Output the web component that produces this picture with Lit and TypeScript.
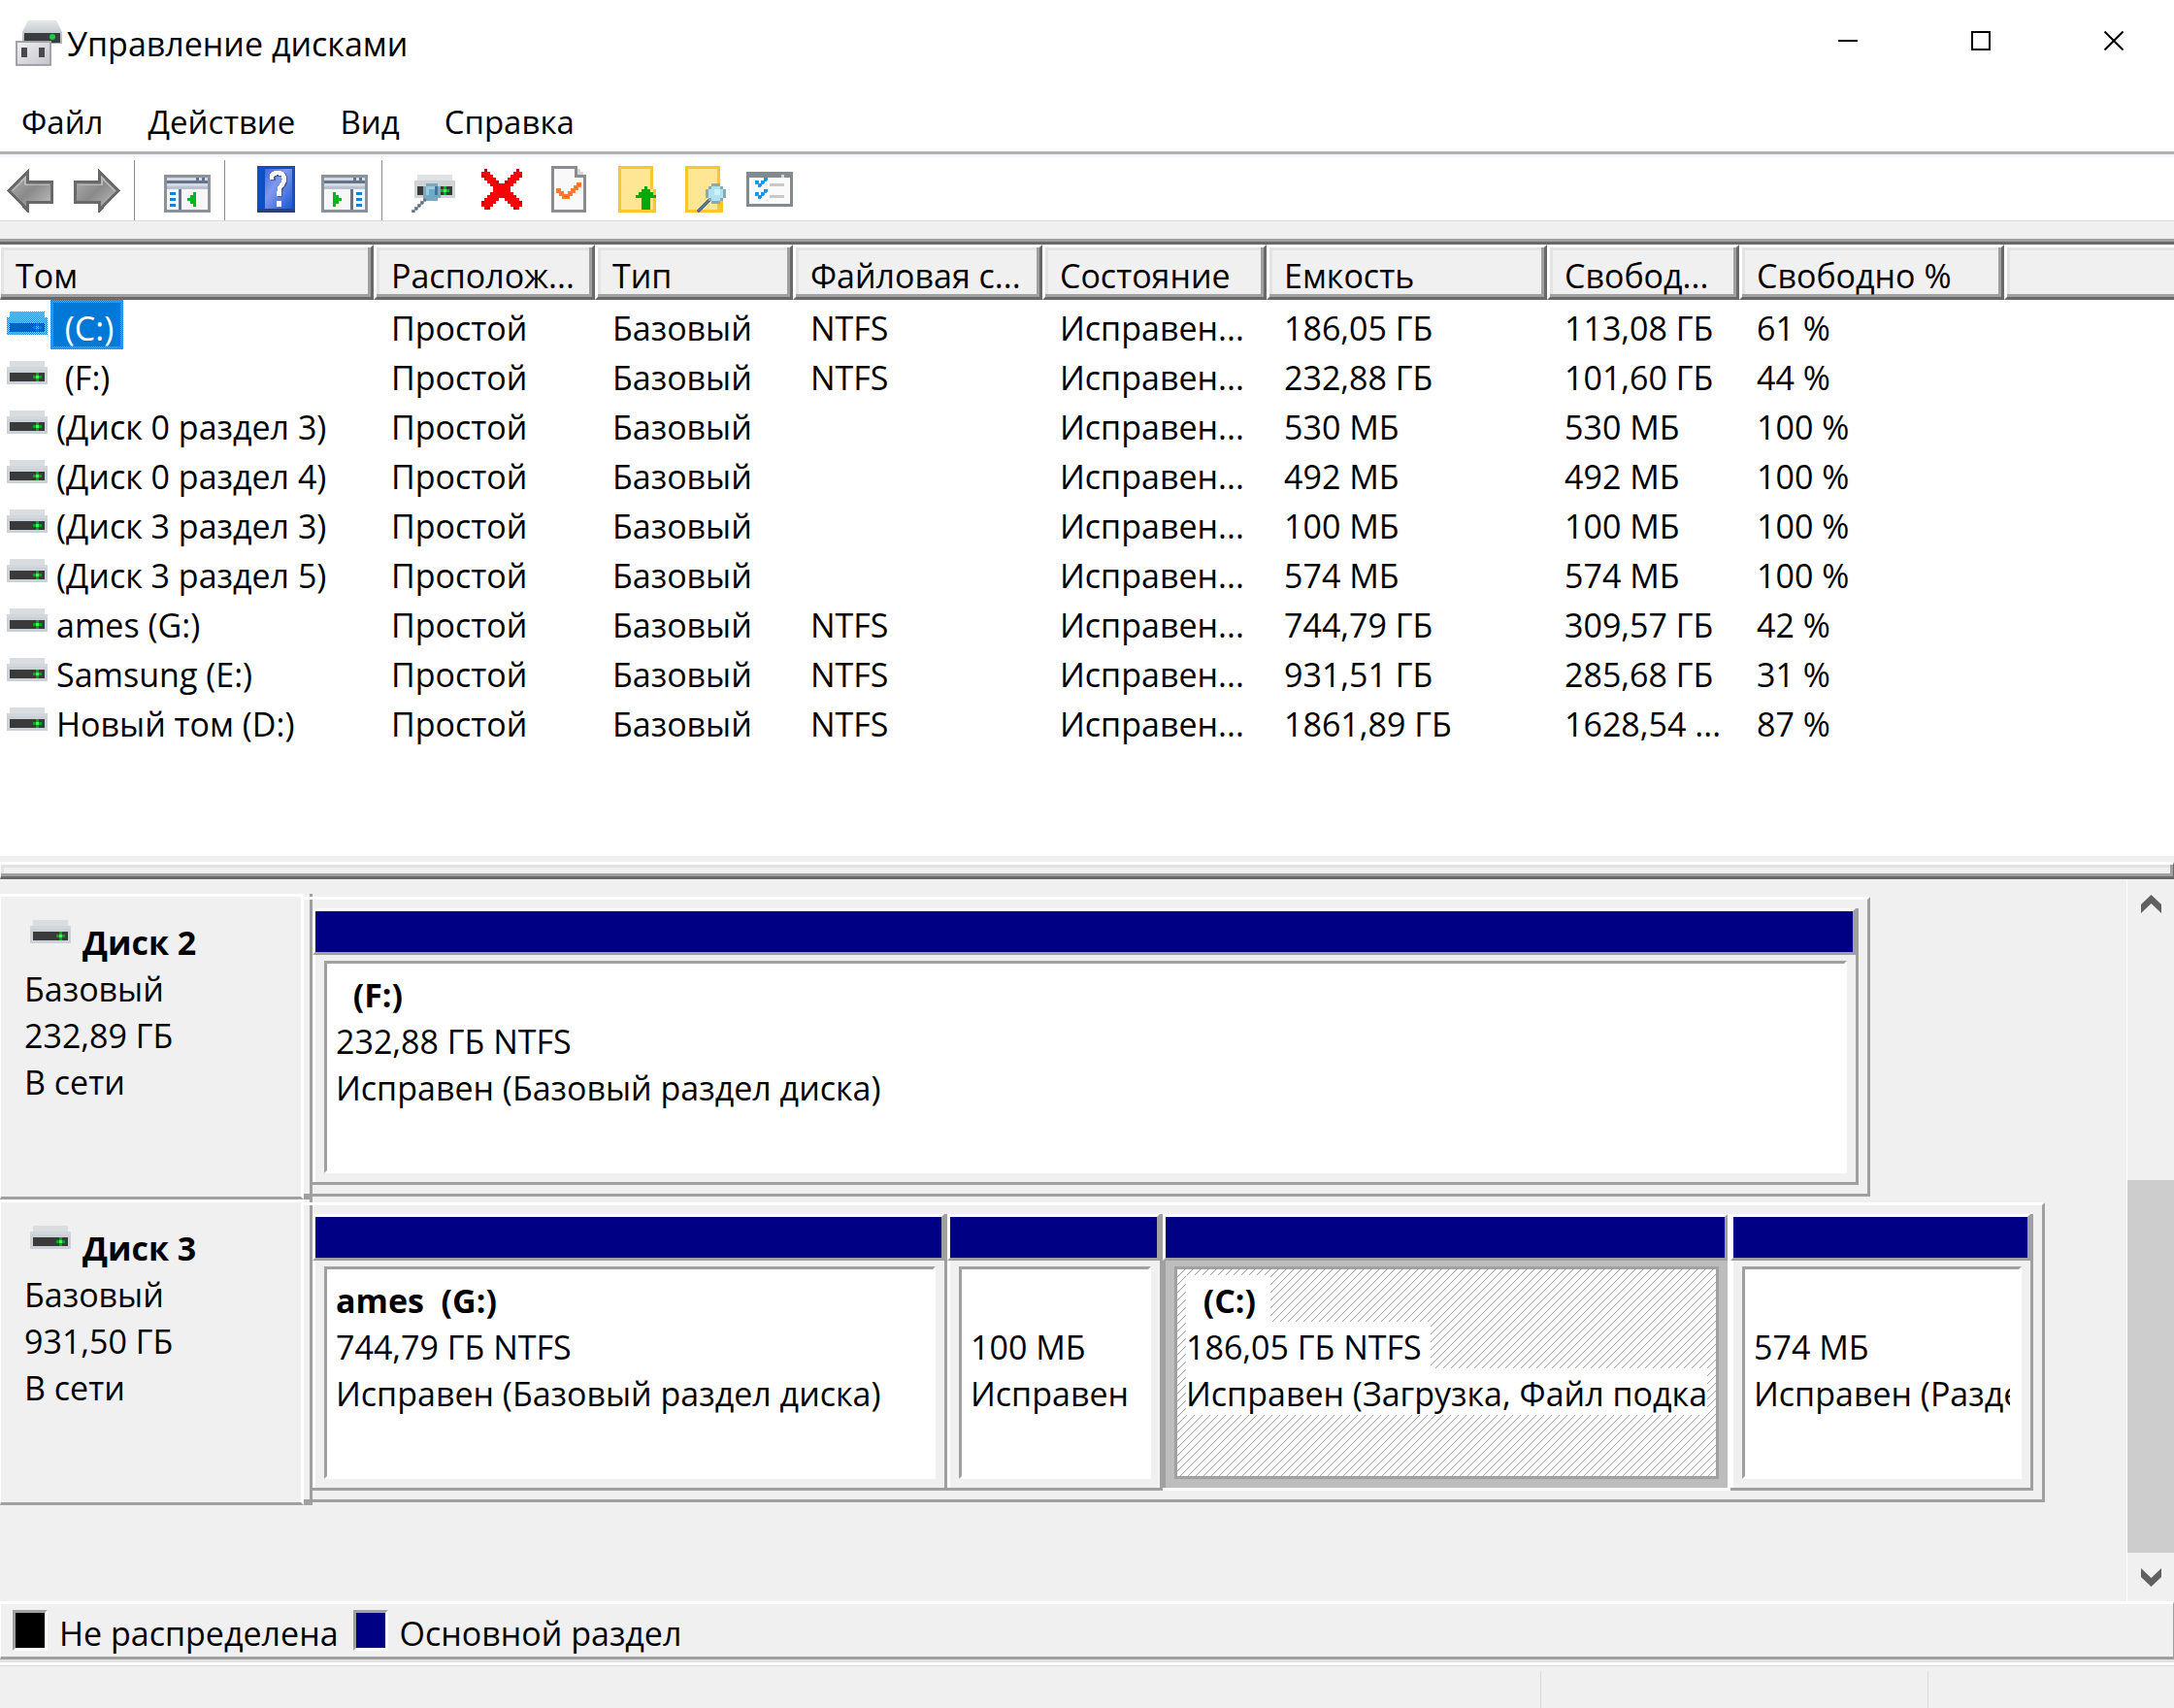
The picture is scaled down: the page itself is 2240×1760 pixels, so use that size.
import { LitElement, html, css, svg, nothing } from "lit";
import { customElement, property } from "lit/decorators.js";

interface Volume {
  name: string;
  fs: string;
  capacity: string;
  free: string;
  percent: string;
}

interface Partition {
  title: string;
  size: string;
  status: string;
  weight: number;
  selected?: boolean;
}

interface Disk {
  name: string;
  size: string;
  span: number;
  partitions: Partition[];
}

const volumes: Volume[] = [
  { name: " (C:)", fs: "NTFS", capacity: "186,05 ГБ", free: "113,08 ГБ", percent: "61 %" },
  { name: " (F:)", fs: "NTFS", capacity: "232,88 ГБ", free: "101,60 ГБ", percent: "44 %" },
  { name: "(Диск 0 раздел 3)", fs: "", capacity: "530 МБ", free: "530 МБ", percent: "100 %" },
  { name: "(Диск 0 раздел 4)", fs: "", capacity: "492 МБ", free: "492 МБ", percent: "100 %" },
  { name: "(Диск 3 раздел 3)", fs: "", capacity: "100 МБ", free: "100 МБ", percent: "100 %" },
  { name: "(Диск 3 раздел 5)", fs: "", capacity: "574 МБ", free: "574 МБ", percent: "100 %" },
  { name: "ames (G:)", fs: "NTFS", capacity: "744,79 ГБ", free: "309,57 ГБ", percent: "42 %" },
  { name: "Samsung (E:)", fs: "NTFS", capacity: "931,51 ГБ", free: "285,68 ГБ", percent: "31 %" },
  { name: "Новый том (D:)", fs: "NTFS", capacity: "1861,89 ГБ", free: "1628,54 ...", percent: "87 %" },
];

/* Spans are shares of the graph area, which is GRAPH_TOTAL units wide. */
const GRAPH_TOTAL = 1869;

const disks: Disk[] = [
  {
    name: "Диск 2",
    size: "232,89 ГБ",
    span: 1605,
    partitions: [
      { title: "  (F:)", size: "232,88 ГБ NTFS", status: "Исправен (Базовый раздел диска)", weight: 1590 },
    ],
  },
  {
    name: "Диск 3",
    size: "931,50 ГБ",
    span: 1785,
    partitions: [
      { title: "ames  (G:)", size: "744,79 ГБ NTFS", status: "Исправен (Базовый раздел диска)", weight: 651 },
      { title: "", size: "100 МБ", status: "Исправен", weight: 219 },
      { title: "  (C:)", size: "186,05 ГБ NTFS", status: "Исправен (Загрузка, Файл подка", weight: 582, selected: true },
      { title: "", size: "574 МБ", status: "Исправен (Разде", weight: 309 },
    ],
  },
];

const headers = ["Том", "Располож...", "Тип", "Файловая с...", "Состояние", "Емкость", "Свобод...", "Свободно %"];

const icons: Record<string, unknown> = {
  back: svg`
    <defs><linearGradient id="g" x1="0" y1="0" x2="1" y2="1"><stop offset="0" stop-color="#b4b4b4"/><stop offset=".5" stop-color="#8a8a8a"/><stop offset="1" stop-color="#c4c4c4"/></linearGradient></defs>
    <path d="M.7 8.5 7.3 1.9V5.5H15.5V12.5H7.3V15.3Z" fill="url(#g)" stroke="#696969"/>
    <path d="M2 8.5 6.4 4V6.5H14.5" fill="none" stroke="#b8b8b8" stroke-width=".6"/>`,
  forward: svg`
    <defs><linearGradient id="g" x1="0" y1="0" x2="1" y2="1"><stop offset="0" stop-color="#b4b4b4"/><stop offset=".5" stop-color="#8a8a8a"/><stop offset="1" stop-color="#c4c4c4"/></linearGradient></defs>
    <path d="M15.3 8.5 8.7 1.9V5.5H.5V12.5H8.7V15.3Z" fill="url(#g)" stroke="#696969"/>
    <path d="M1.5 6.5H9.6V4L14 8.5" fill="none" stroke="#b8b8b8" stroke-width=".6"/>`,
  tree: svg`
    <path d="M0 3H16V16H0Z" fill="#8b9299"/><path d="M1 4H15V7H1Z" fill="#d3dae2"/>
    <path d="M1 5H15V6H1Z" fill="#64748c"/><path d="M11 4h1v1h-1zM13 4h1v1h-1z" fill="#64748c"/>
    <path d="M1 7H15V8H1Z" fill="#b9c2cc"/><path d="M1 8H15V15H1Z" fill="#f7f7f7"/>
    <path d="M5 8H6V15H5Z" fill="#64748c"/>
    <path d="M2 9h2v1H2zM2 11h2v1H2zM2 13h2v1H2z" fill="#1583d0"/>
    <path d="M11 9V14H10V13H9V12H8V11H9V10H10V9Z" fill="#00b81c"/>`,
  help: svg`
    <defs><linearGradient id="h" x1="0" y1="0" x2="1" y2="1"><stop offset="0" stop-color="#3f68d8"/><stop offset=".4" stop-color="#8199ee"/><stop offset="1" stop-color="#1a58d0"/></linearGradient></defs>
    <path d="M1 0H14V16H1Z" fill="#0f4fc4"/><path d="M3.5 1H13V14.5H3.5Z" fill="url(#h)"/>
    <path d="M1 14.5H14V16H1Z" fill="#2c4274"/><path d="M13 1h1v14h-1z" fill="#1a4fb8"/>
    <path d="M6.5 5V4Q6.5 2.7 8.5 2.7 10.7 2.7 10.7 4.8 10.7 6.3 9.5 7.3 8.9 8 8.9 10.5" fill="none" stroke="#4b5f9c" stroke-width="1.6"/>
    <path d="M6 4.6V3.6Q6.2 2.4 8.2 2.4 10.3 2.4 10.3 4.5 10.3 6 9.1 7 8.5 7.7 8.5 10.3M8.5 12V14" fill="none" stroke="#fff" stroke-width="1.5"/>`,
  pane: svg`
    <path d="M0 3H16V16H0Z" fill="#8b9299"/><path d="M1 4H15V7H1Z" fill="#d3dae2"/>
    <path d="M1 5H15V6H1Z" fill="#64748c"/><path d="M11 4h1v1h-1zM13 4h1v1h-1z" fill="#64748c"/>
    <path d="M1 7H15V8H1Z" fill="#b9c2cc"/><path d="M1 8H15V15H1Z" fill="#f7f7f7"/>
    <path d="M10 8H11V15H10Z" fill="#64748c"/>
    <path d="M12 9h2v1h-2zM12 11h2v1h-2zM12 13h2v1h-2z" fill="#1583d0"/>
    <path d="M4 9V14H5V13H6V12H7V11H6V10H5V9Z" fill="#00b81c"/>`,
  scan: svg`
    <path d="M2 3H14V5H15V11H1V5H2Z" fill="#ced3d6"/><path d="M2 3H14V5H2Z" fill="#dfe2e4"/>
    <path d="M2 7H14V10H2Z" fill="#383838"/><path d="M11 7h1v3h-1zM10 8h3v1h-3z" fill="#00b81c"/><path d="M11 8h1v1h-1z" fill="#2cff4c"/>
    <path d="M0 15H1V14H2V13H3V12H4V11H5V12H4V13H3V14H2V15H1V16H0Z" fill="#5e6e7c" stroke="#8794a0" stroke-width=".3"/>
    <path d="M5 6H9V7H10V11H9V12H5V11H4V7H5Z" fill="#7fa6bc"/><path d="M5 7H9V11H5Z" fill="#6fa9c8"/>
    <path d="M5 7H8V8H6V10H5Z" fill="#9ccbe0"/><path d="M8 7H9V10H8Z" fill="#3d7899"/>`,
  remove: svg`
    <path d="M2 1H3V2H4V3H5V4H6V5H7V6H9V5H10V4H11V3H12V2H13V1H14V2H15V4H14V5H13V6H12V7H11V9H12V10H13V11H14V12H15V14H14V15H12V14H11V13H10V12H9V11H7V12H6V13H5V14H4V15H2V14H1V12H2V11H3V10H4V9H5V7H4V6H3V5H2V4H1V2H2Z" fill="#fb0007"/>
    <path d="M2 1h1v1H2zM13 1h1v1h-1zM1 3h1v1H1zM14 3h1v1h-1zM1 12h1v1H1zM14 12h1v1h-1zM3 14h1v1H3zM12 14h1v1h-1zM6 5h1v1H6zM9 5h1v1H9z" fill="#c4000c"/>`,
  check: svg`
    <path d="M2 0H11V1H12V2H13V3H14V16H2Z" fill="#8c8c8e"/><path d="M3 1H10V4H13V15H3Z" fill="#f9f9f9"/>
    <path d="M11 1h1v1h1v1h-2z" fill="#d8d8da"/>
    <path d="M11 6H12V7H11V8H10V9H9V10H8V11H6V10H5V9H4V8H5V9H6V10H8V9H9V8H10V7H11Z" fill="#ff5a0a" stroke="#ff7a38" stroke-width=".4"/>`,
  up: svg`
    <path d="M2 0H14V8H15V16H2Z" fill="#f9c62f"/><path d="M3 1H13V15H3Z" fill="#ffe694"/><path d="M13 8h1v7h-1z" fill="#ffe08a"/>
    <path d="M11 7H12V8H13V9H14V10H15V11H13V15H10V11H8V10H9V9H10V8H11Z" fill="#00a80a"/>`,
  find: svg`
    <path d="M2 0H14V8H15V16H2Z" fill="#f9c62f"/><path d="M3 1H13V15H3Z" fill="#ffe694"/>
    <path d="M6.3 15.7 10.5 11.5" stroke="#5f7282" stroke-width="1.3"/>
    <path d="M11 6H14V7H15V8H16V11H15V12H14V13H11V12H10V11H9V8H10V7H11Z" fill="#8aa9b0"/><path d="M11 7H14V8H15V11H14V12H11V11H10V8H11Z" fill="#aee2f2"/><path d="M12 8h2v2h-2z" fill="#cdf2fb"/>`,
  list: svg`
    <path d="M0 2H16V14H0Z" fill="#838a8e"/><path d="M1 4H15V13H1Z" fill="#fafafa"/><path d="M12 3h1v1h-1z" fill="#d4d8da"/>
    <path d="M3 5H4V6H5V5H6V4H7V5H6V6H5V7H4V6H3ZM3 9H4V10H5V9H6V8H7V9H6V10H5V11H4V10H3Z" fill="#1196ea" stroke="#1196ea" stroke-width=".3"/>
    <path d="M8 6h5v1H8zM8 10h5v1H8z" fill="#c8c8c8"/>`,
};

const driveArt = svg`
  <path d="M1 0H13V2H14V8H0V2H1Z" fill="#cbd1d6"/>
  <path d="M1 0H13V2H1Z" fill="#d9dde0"/><path d="M0 2H14V3H0Z" fill="#d2d7dc"/>
  <path d="M1 4H13V7H1Z" fill="#3a3a3a"/>
  <path d="M10 4h1v3h-1zM9 5h3v1H9z" fill="#00a51e"/><path d="M10 5h1v1h-1z" fill="#2eff52"/>`;

const appArt = svg`
  <defs>
    <linearGradient id="lid" x1="0" y1="0" x2="0" y2="1"><stop offset="0" stop-color="#e4e8ea"/><stop offset="1" stop-color="#aab0b6"/></linearGradient>
    <linearGradient id="plug" x1="0" y1="0" x2="1" y2="1"><stop offset="0" stop-color="#f1f1f3"/><stop offset="1" stop-color="#c4c4ca"/></linearGradient>
  </defs>
  <path d="M13 0H42L48 12V24H7V12Z" fill="url(#lid)"/>
  <path d="M9 13H46V23H9Z" fill="#3a3d3f"/>
  <circle cx="38" cy="17" r="3" fill="#17cf3c"/>
  <path d="M1 22H36V46H1Z" fill="url(#plug)" stroke="#a2a2a8" stroke-width="2"/>
  <path d="M6 28h6v10H6zM24 28h6v10H24z" fill="#4a4a4e"/>`;

@customElement("drive-icon")
export class DriveIcon extends LitElement {
  @property({ type: Boolean }) selected = false;

  static styles = css`
    :host {
      display: inline-block;
      flex: none;
      width: 42px;
      height: 24px;
    }
    svg {
      display: block;
      width: 42px;
      height: 24px;
    }
  `;

  render() {
    return html`<svg viewBox="0 0 14 8" shape-rendering="crispEdges" aria-hidden="true">
      ${driveArt}
      ${this.selected
        ? svg`<defs><pattern id="dots" width="2" height="2" patternUnits="userSpaceOnUse" patternTransform="scale(.33333)">
            <path d="M0 0h1v1H0zM1 1h1v1H1z" fill="#0078d7"/></pattern></defs>
            <path d="M1 0H13V2H14V8H0V2H1Z" fill="url(#dots)"/>`
        : nothing}
    </svg>`;
  }
}

@customElement("tool-button")
export class ToolButton extends LitElement {
  @property() icon = "";
  @property() label = "";

  static styles = css`
    :host {
      display: block;
      width: 48px;
      height: 48px;
    }
    button {
      display: block;
      border: 0;
      padding: 0;
      background: none;
    }
    svg {
      display: block;
      width: 48px;
      height: 48px;
    }
  `;

  render() {
    return html`<button aria-label=${this.label}>
      <svg viewBox="0 0 16 16" shape-rendering="crispEdges" aria-hidden="true">${icons[this.icon]}</svg>
    </button>`;
  }
}

@customElement("app-root")
export class AppRoot extends LitElement {
  static styles = css`
    :host {
      --face: #f0f0f0;
      --light: #e3e3e3;
      --shade: #a0a0a0;
      --dark: #696969;
      --navy: #000084;
      display: flex;
      flex-direction: column;
      min-height: 100vh;
      background: var(--face);
      color: #000;
      font: 34px/48px "Open Sans", "Noto Sans", sans-serif;
      white-space: nowrap;
      overflow: hidden;
    }
    * {
      box-sizing: border-box;
    }
    button {
      border: 0;
      padding: 0;
      background: none;
      font: inherit;
      color: inherit;
    }
    svg {
      display: block;
    }
    .titlebar {
      display: flex;
      align-items: flex-start;
      justify-content: space-between;
      height: 98px;
      padding-left: 16px;
      background: #fff;
    }
    .brand {
      display: flex;
      gap: 5px;
      padding-top: 21px;
    }
    .brand svg {
      width: 48px;
      height: 47px;
    }
    h1 {
      margin: 0;
      font-size: 34px;
      font-weight: 400;
      line-height: 48px;
    }
    .controls {
      display: flex;
      gap: 33px;
      padding-right: 10px;
    }
    .controls button {
      display: grid;
      place-items: center;
      width: 104px;
      height: 84px;
    }
    .controls svg {
      width: 20px;
      height: 20px;
    }
    .menu {
      display: flex;
      gap: 46px;
      height: 58px;
      padding-left: 22px;
      background: #fff;
      font-size: 33px;
    }
    .menu button {
      height: 56px;
      line-height: 56px;
    }
    .toolbar {
      display: flex;
      align-items: flex-start;
      height: 72px;
      padding: 6px 7px 0;
      border-top: 3px solid #b1b1b1;
      border-bottom: 1px solid #d9d9d9;
      background: linear-gradient(#f1f5f9, #f1f5f9) 0 0 / 100% 3px no-repeat #fff;
    }
    .toolbar tool-button {
      margin-top: 6px;
    }
    tool-button + tool-button {
      margin-left: 21px;
    }
    .separator {
      width: 1px;
      height: 62px;
      margin: 0 30px 0 14px;
      background: #8c8c8c;
    }
    .band {
      height: 18px;
    }
    .volumes {
      flex: 633 1 0;
      border-top: 3px solid var(--shade);
      background: #fff;
    }
    table {
      width: 100%;
      table-layout: fixed;
      border-top: 3px solid var(--dark);
      border-spacing: 0;
      border-collapse: separate;
    }
    .c-name { width: 385px; }
    .c-layout { width: 228px; }
    .c-type { width: 204px; }
    .c-fs { width: 257px; }
    .c-state { width: 231px; }
    .c-size { width: 289px; }
    .c-free { width: 198px; }
    .c-percent { width: 273px; }
    th {
      height: 57px;
      padding: 8px 0 0 15px;
      border: 3px solid var(--dark);
      border-top-color: #fff;
      border-left-color: #fff;
      background: var(--face);
      box-shadow: inset -3px -3px var(--shade), inset 3px 3px var(--light);
      font-weight: 400;
      line-height: 39px;
      text-align: left;
      overflow: hidden;
    }
    th:first-child {
      border-left-width: 1px;
    }
    th:last-child {
      border-right: 0;
      box-shadow: inset 0 -3px var(--shade), inset 3px 3px var(--light);
    }
    td {
      height: 51px;
      padding: 8px 0 0 18px;
      line-height: 43px;
      overflow: hidden;
    }
    td:first-child {
      padding: 0 0 0 7px;
    }
    .entry {
      display: flex;
      align-items: flex-start;
      gap: 3px;
      height: 51px;
    }
    .entry drive-icon {
      margin-top: 12px;
    }
    .caption {
      height: 51px;
      padding: 8px 10px 0 6px;
      line-height: 43px;
      white-space: pre;
    }
    .caption.selected {
      color: #fff;
      background:
        linear-gradient(#0078d7, #0078d7) 3px 3px / calc(100% - 6px) calc(100% - 6px) no-repeat,
        repeating-conic-gradient(#0078d7 0 25%, #e58a3c 0 50%) 0 0 / 2px 2px;
    }
    .splitter {
      height: 18px;
      margin-top: 6px;
      border: 3px solid var(--dark);
      border-width: 3px 1px 3px 1px;
      border-top-color: #fff;
      border-left-color: #fff;
      box-shadow: inset -3px -3px var(--shade), inset 3px 3px var(--light);
    }
    .disks {
      display: flex;
      flex: 744 1 0;
    }
    .canvas {
      flex: 1;
      padding-top: 15px;
    }
    .disk {
      display: grid;
      height: 315px;
    }
    .label {
      padding: 21px 0 0 24px;
      border: 3px solid #fff;
      border-left-width: 1px;
      border-bottom-color: var(--shade);
    }
    .label h2 {
      display: flex;
      align-items: flex-start;
      gap: 12px;
      margin: 0;
      padding-left: 6px;
      font: inherit;
      font-weight: 700;
    }
    .label drive-icon {
      margin-top: 3px;
    }
    .line {
      display: block;
      width: fit-content;
      height: 48px;
      padding-top: 4px;
      line-height: 44px;
      white-space: pre;
    }
    .gutter {
      background:
        linear-gradient(#fff, #fff) 0 3px / 9px 3px no-repeat,
        linear-gradient(var(--shade), var(--shade)) 0 100% / 9px 6px no-repeat,
        linear-gradient(var(--shade), var(--shade)) 100% 0 / 3px 100% no-repeat;
    }
    .graph {
      display: flex;
      height: 309px;
      margin-top: 3px;
      padding: 9px 9px 9px 0;
      border: 0 solid var(--shade);
      border-width: 3px 3px 3px 0;
      border-top-color: #fff;
    }
    .partition {
      display: flex;
      flex-direction: column;
      flex-basis: 0;
      min-width: 0;
      border: 0 solid var(--shade);
      border-width: 0 3px 3px 0;
    }
    .bar {
      height: 48px;
      border: 3px solid var(--shade);
      border-top-color: #fff;
      border-left-color: #fff;
      background: var(--navy);
    }
    .cell {
      flex: 1;
      padding: 6px 9px 9px;
      border-left: 3px solid #fff;
    }
    .box {
      position: relative;
      height: 219px;
      padding: 6px 9px 0;
      border: 3px solid #fff;
      border-top-color: var(--shade);
      border-left-color: var(--shade);
      background: #fff;
    }
    .hatch {
      position: absolute;
      inset: 0;
      width: 100%;
      height: 100%;
    }
    .text {
      position: relative;
      overflow: hidden;
    }
    .partition.selected {
      border-color: #fff;
    }
    .selected .cell {
      border-left-color: var(--shade);
      background: #bdbdbd;
    }
    .selected .box {
      border-color: var(--shade);
    }
    .selected .line {
      padding-right: 9px;
      background: #fff;
    }
    .selected .title {
      padding-right: 15px;
    }
    .scrollbar {
      display: flex;
      flex-direction: column;
      width: 49px;
      border-left: 1px solid #fff;
    }
    .scrollbar button {
      display: grid;
      place-items: center;
      height: 50px;
    }
    .scrollbar svg {
      width: 21px;
      height: 19px;
    }
    .track {
      display: flex;
      flex-direction: column;
      flex: 1;
    }
    .before {
      flex: 260;
    }
    .thumb {
      flex: 384;
      background: #cdcdcd;
    }
    .legend {
      display: flex;
      gap: 15px;
      height: 60px;
      padding: 6px 12px 0;
      border: 3px solid var(--shade);
      border-width: 3px 1px 3px 1px;
      border-top-color: #fff;
      border-left-color: #fff;
    }
    .key {
      display: flex;
      gap: 12px;
      line-height: 48px;
    }
    .swatch {
      width: 36px;
      height: 42px;
      border: 3px solid #fff;
      border-top-color: var(--shade);
      border-left-color: var(--shade);
      background: #000;
    }
    .swatch.primary {
      background: var(--navy);
    }
    .status {
      display: flex;
      justify-content: flex-end;
      height: 44px;
      margin-top: 6px;
      padding-top: 5px;
      border-top: 1px solid #d9d9d9;
      box-shadow: 0 -3px #fff, 0 -6px var(--light);
    }
    .status span {
      border-left: 1px solid #d9d9d9;
    }
    .panel-a {
      width: 399px;
    }
    .panel-b {
      width: 254px;
    }
  `;

  private renderVolume(v: Volume, i: number) {
    const selected = i === 0;
    return html`<tr>
      <td>
        <div class="entry">
          <drive-icon ?selected=${selected}></drive-icon><span class="caption ${selected ? "selected" : ""}">${v.name}</span>
        </div>
      </td>
      <td>Простой</td>
      <td>Базовый</td>
      <td>${v.fs}</td>
      <td>Исправен...</td>
      <td>${v.capacity}</td>
      <td>${v.free}</td>
      <td>${v.percent}</td>
      <td></td>
    </tr>`;
  }

  private renderPartition(p: Partition) {
    return html`<div class="partition ${p.selected ? "selected" : ""}" style="flex-grow:${p.weight}">
      <div class="bar"></div>
      <div class="cell">
        <div class="box">
          ${p.selected
            ? html`<svg class="hatch" shape-rendering="crispEdges" aria-hidden="true">
                <defs><pattern id="hatch" width="8" height="8" patternUnits="userSpaceOnUse">
                  <path d="M0 7h1v1H0zM1 6h1v1H1zM2 5h1v1H2zM3 4h1v1H3zM4 3h1v1H4zM5 2h1v1H5zM6 1h1v1H6zM7 0h1v1H7z" fill="#a0a0a0"/>
                </pattern></defs>
                <rect width="100%" height="100%" fill="url(#hatch)"/>
              </svg>`
            : nothing}
          <div class="text">
            <strong class="line title">${p.title}</strong>
            <span class="line">${p.size}</span>
            <span class="line">${p.status}</span>
          </div>
        </div>
      </div>
    </div>`;
  }

  private renderDisk(d: Disk) {
    return html`<section class="disk" style="grid-template-columns:313px 9px ${d.span}fr ${GRAPH_TOTAL - d.span}fr">
      <div class="label">
        <h2><drive-icon></drive-icon><span class="line">${d.name}</span></h2>
        <span class="line">Базовый</span>
        <span class="line">${d.size}</span>
        <span class="line">В сети</span>
      </div>
      <div class="gutter"></div>
      <div class="graph">${d.partitions.map((p) => this.renderPartition(p))}</div>
    </section>`;
  }

  render() {
    return html`
      <header class="titlebar">
        <div class="brand">
          <svg viewBox="0 0 48 47" aria-hidden="true">${appArt}</svg>
          <h1>Управление дисками</h1>
        </div>
        <div class="controls">
          <button aria-label="Свернуть">
            <svg viewBox="0 0 20 20"><path d="M0 9H20V11H0Z" /></svg>
          </button>
          <button aria-label="Развернуть">
            <svg viewBox="0 0 20 20"><path d="M1 1H19V19H1Z" fill="none" stroke="#000" stroke-width="2" /></svg>
          </button>
          <button aria-label="Закрыть">
            <svg viewBox="0 0 20 20"><path d="M.5.5 19.5 19.5M19.5.5.5 19.5" stroke="#000" stroke-width="2" /></svg>
          </button>
        </div>
      </header>
      <nav class="menu">
        <button>Файл</button><button>Действие</button><button>Вид</button><button>Справка</button>
      </nav>
      <div class="toolbar" role="toolbar">
        <tool-button icon="back" label="Назад"></tool-button>
        <tool-button icon="forward" label="Вперед"></tool-button>
        <span class="separator"></span>
        <tool-button icon="tree" label="Дерево консоли"></tool-button>
        <span class="separator"></span>
        <tool-button icon="help" label="Справка"></tool-button>
        <tool-button icon="pane" label="Панель действий"></tool-button>
        <span class="separator"></span>
        <tool-button icon="scan" label="Обновить"></tool-button>
        <tool-button icon="remove" label="Удалить"></tool-button>
        <tool-button icon="check" label="Свойства"></tool-button>
        <tool-button icon="up" label="Открыть"></tool-button>
        <tool-button icon="find" label="Найти"></tool-button>
        <tool-button icon="list" label="Параметры"></tool-button>
      </div>
      <div class="band"></div>
      <main class="volumes">
        <table>
          <colgroup>
            <col class="c-name" /><col class="c-layout" /><col class="c-type" /><col class="c-fs" />
            <col class="c-state" /><col class="c-size" /><col class="c-free" /><col class="c-percent" /><col />
          </colgroup>
          <thead>
            <tr>${headers.map((h) => html`<th scope="col">${h}</th>`)}<th></th></tr>
          </thead>
          <tbody>${volumes.map((v, i) => this.renderVolume(v, i))}</tbody>
        </table>
      </main>
      <div class="splitter"></div>
      <div class="disks">
        <div class="canvas">${disks.map((d) => this.renderDisk(d))}</div>
        <div class="scrollbar">
          <button aria-label="Вверх">
            <svg viewBox="0 0 21 19"><path d="M10.5 0 21 10V19L10.5 9 0 19V10Z" fill="#606060" /></svg>
          </button>
          <div class="track"><div class="before"></div><div class="thumb"></div></div>
          <button aria-label="Вниз">
            <svg viewBox="0 0 21 19"><path d="M10.5 19 21 9V0L10.5 10 0 0V9Z" fill="#606060" /></svg>
          </button>
        </div>
      </div>
      <footer>
        <div class="legend">
          <span class="key"><span class="swatch"></span>Не распределена</span>
          <span class="key"><span class="swatch primary"></span>Основной раздел</span>
        </div>
        <div class="status"><span class="panel-a"></span><span class="panel-b"></span></div>
      </footer>
    `;
  }
}
